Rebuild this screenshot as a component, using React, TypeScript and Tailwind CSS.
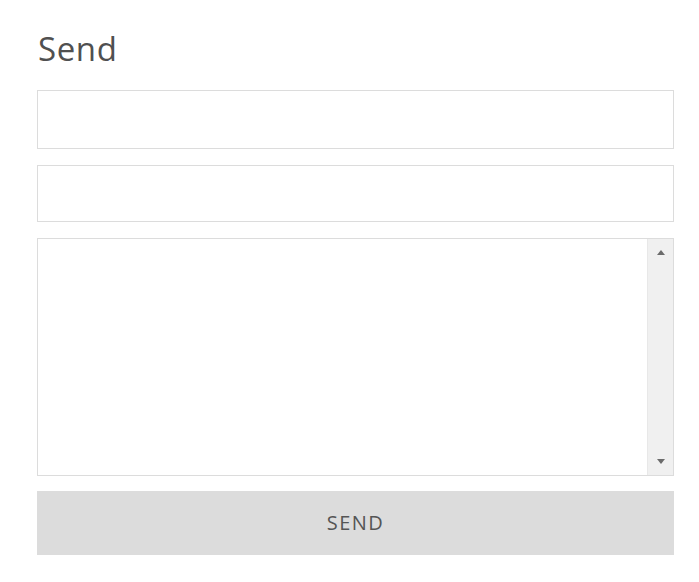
import { useState } from 'react';

export default function App() {
  const [name, setName] = useState('');
  const [email, setEmail] = useState('');
  const [message, setMessage] = useState('');

  return (
    <div className="min-h-[582px] bg-white pl-[37px] pt-[28px] font-['Open_Sans',sans-serif]">
      <form
        className="flex w-[637px] flex-col"
        onSubmit={(e) => e.preventDefault()}
      >
        <h2 className="mb-[20px] pl-[1px] text-[33px] leading-[42px] tracking-[0.6px] text-[#505050]">
          Send
        </h2>

        <input
          type="text"
          value={name}
          onChange={(e) => setName(e.target.value)}
          className="mb-[16px] h-[59px] w-full border border-[#dcdcdc] bg-white px-3 text-[15px] text-[#555] outline-none"
        />

        <input
          type="email"
          value={email}
          onChange={(e) => setEmail(e.target.value)}
          className="mb-[16px] h-[57px] w-full border border-[#dcdcdc] bg-white px-3 text-[15px] text-[#555] outline-none"
        />

        {/* textarea with classic scrollbar look */}
        <div className="mb-[15px] flex h-[238px] w-full border border-[#dcdcdc] bg-white">
          <textarea
            value={message}
            onChange={(e) => setMessage(e.target.value)}
            className="h-full flex-1 resize-none bg-white px-3 py-2 text-[15px] text-[#555] outline-none"
          />
          <div className="flex w-[26px] flex-col items-center justify-between border-l border-[#e8e8e8] bg-[#f0f0f0] py-[11px]">
            <span className="h-0 w-0 border-x-[4px] border-b-[5px] border-x-transparent border-b-[#6b6b6b]" />
            <span className="h-0 w-0 border-x-[4px] border-t-[5px] border-x-transparent border-t-[#6b6b6b]" />
          </div>
        </div>

        <button
          type="submit"
          className="h-[64px] w-full bg-[#dcdcdc] text-[20px] tracking-[1.5px] text-[#555]"
        >
          SEND
        </button>
      </form>
    </div>
  );
}
